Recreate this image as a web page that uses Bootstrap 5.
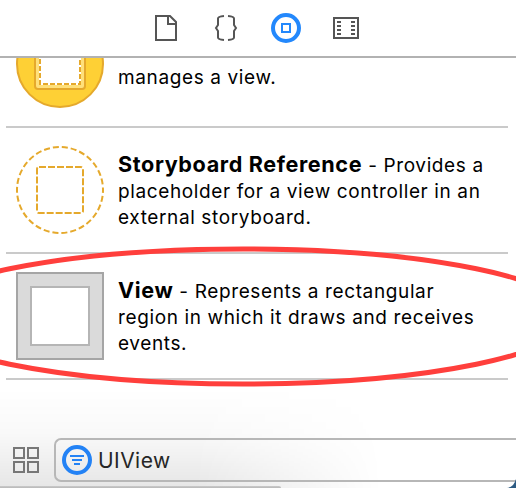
<!DOCTYPE html>
<html lang="en">
<head>
<meta charset="utf-8">
<meta name="viewport" content="width=device-width, initial-scale=1">
<title>Object Library</title>
<link href="https://cdn.jsdelivr.net/npm/bootstrap@5.3.0/dist/css/bootstrap.min.css" rel="stylesheet">
<style>
body{font-family:Inter,"Liberation Sans",sans-serif;color:#000;background:#fff}
svg{display:block;flex:none}
.library{width:516px;height:488px}
.tabs{height:58px;border-bottom:2px solid #b2b2b2;padding:13px 0 0 151px;gap:30px}
.objects{height:370px}
.entry{height:126px;margin:0 8px 0 6px;border-bottom:2px solid #cacaca;padding:18px 0 0 10px;gap:14px}
.entry.clipped{margin-top:-56px}
.copy{font-size:19px;line-height:26px;letter-spacing:.62px;white-space:nowrap;margin-top:7px}
.clipped .copy{margin-top:19px}
.copy b{font-size:21.6px;letter-spacing:.62px;line-height:20px}
.filter{height:60px;padding:10px 0 0 12px;gap:13px}
.field{height:44px;border:2px solid #b7b7b7;border-right:0;border-radius:7px 0 0 7px;padding-left:6px;gap:6px;font-size:21px;letter-spacing:.45px;color:#262626}
.field span{padding-top:2px}
.shade{left:0;bottom:0;width:390px;height:100px;background:linear-gradient(to bottom,#0000 0,#00000006 45%,#00000019 100%);-webkit-mask-image:linear-gradient(to right,#000 50%,#0000 98%);mask-image:linear-gradient(to right,#000 50%,#0000 98%)}
.edge{left:0;bottom:0;width:281px;height:2px;background:linear-gradient(#cacaca,#b8b8b8);border-radius:0 2px 0 0}
.over{left:0;top:0}
</style>
</head>
<body>
<main class="library position-relative overflow-hidden d-flex flex-column">
  <div class="shade position-absolute"></div>
  <nav class="tabs d-flex flex-shrink-0 bg-white position-relative">
    <svg width="30" height="30" fill="none" stroke="#555" stroke-width="2"><path d="M5 3H19L25 9V27H5Z"/><path d="M17 4V11H24"/></svg>
    <svg width="30" height="30" fill="none" stroke="#555" stroke-width="2"><path d="M13 3Q7 3.500 7 5.500V12L5 15L7 18V24.500Q7 26.500 13 27"/><path d="M17 3Q23 3.500 23 5.500V12L25 15L23 18V24.500Q23 26.500 17 27"/></svg>
    <svg width="30" height="30" fill="none" stroke="#2388fc"><circle cx="15" cy="15" r="13" stroke-width="4"/><path d="M11 11H19V19H11Z" stroke-width="2"/></svg>
    <svg width="30" height="30" fill="none" stroke="#555" stroke-width="2"><path d="M3 5H27V25H3Z"/><path d="M6 9H10M6 13H10M6 17H10M6 21H10M20 9H24M20 13H24M20 17H24M20 21H24"/></svg>
  </nav>
  <section class="objects overflow-hidden flex-shrink-0 position-relative">
    <article class="entry clipped d-flex">
      <svg width="88" height="88"><circle cx="44" cy="44" r="43" fill="#fed035" stroke="#e5a92c" stroke-width="2"/><rect x="19" y="19" width="50" height="50" rx="3" fill="#ffe07a" stroke="#e5a92c" stroke-width="2"/><path d="M23 23H65V65H23Z" fill="#fff"/><rect x="24" y="24" width="40" height="40" fill="none" stroke="#e5a92c" stroke-width="2" stroke-dasharray="5 2"/></svg>
      <p class="copy mb-0"><b>View Controller</b> - A controller that<br>manages a view.</p>
    </article>
    <article class="entry d-flex">
      <svg width="88" height="88" fill="none" stroke="#e5a92c" stroke-width="2"><circle cx="44" cy="44" r="43" stroke-dasharray="6 3.006" stroke-dashoffset="3"/><rect x="21" y="21" width="46" height="46" rx="2" stroke-dasharray="7 2"/></svg>
      <p class="copy mb-0"><b>Storyboard Reference</b> - Provides a<br>placeholder for a view controller in an<br>external storyboard.</p>
    </article>
    <article class="entry d-flex">
      <svg width="88" height="88" stroke-width="2"><path d="M1 1H87V87H1Z" fill="#dadada" stroke="#a5a5a5"/><path d="M15 15H73V73H15Z" fill="#fff" stroke="#b5b5b5"/></svg>
      <p class="copy mb-0"><b>View</b> - Represents a rectangular<br>region in which it draws and receives<br>events.</p>
    </article>
  </section>
  <footer class="filter d-flex position-relative">
    <svg width="29" height="44" fill="none" stroke="#777" stroke-width="2"><path d="M2 10H12V20H2ZM16 10H26V20H16ZM2 24H12V34H2ZM16 24H26V34H16Z"/></svg>
    <div class="field d-flex align-items-center flex-grow-1">
      <svg width="30" height="30" fill="none" stroke="#2382f5"><circle cx="15" cy="15" r="13" stroke-width="4"/><path d="M8 11H22M10 15H20M12 19H18" stroke-width="2"/></svg>
      <span>UIView</span>
    </div>
  </footer>
  <div class="edge position-absolute"></div>
  <svg class="over position-absolute" width="516" height="488"><ellipse cx="243" cy="316.500" rx="330" ry="67.500" fill="none" stroke="#ff3f3c" stroke-width="5"/><path d="M516 479Q514 487 507 488H516Z" fill="#2d5b83"/></svg>
</main>
<script src="https://cdn.jsdelivr.net/npm/bootstrap@5.3.0/dist/js/bootstrap.bundle.min.js"></script>
</body>
</html>
